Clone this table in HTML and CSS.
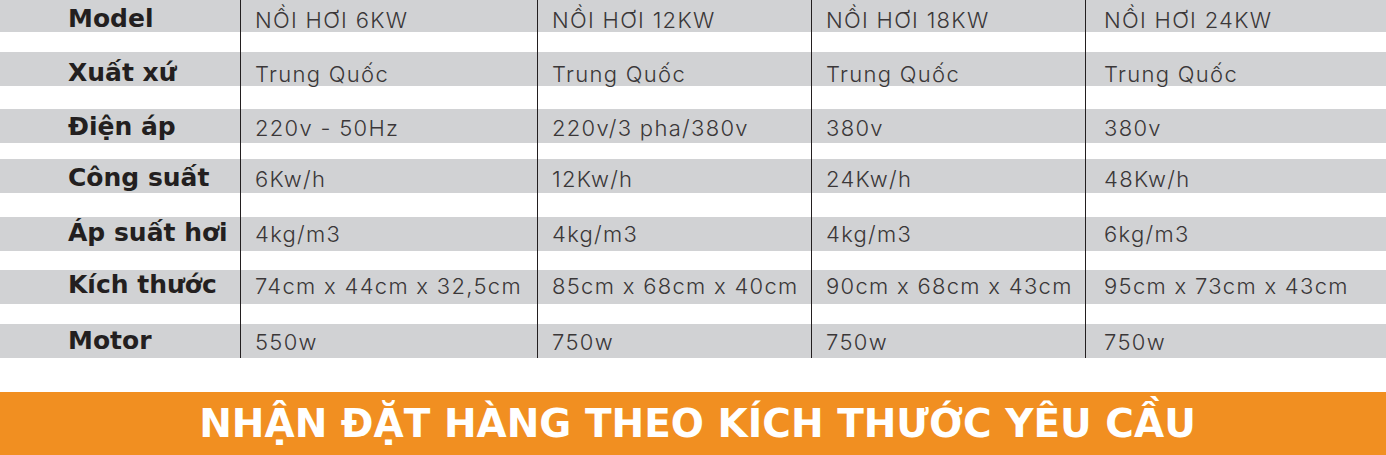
FILE: index.html
```html
<!DOCTYPE html>
<html lang="vi">
<head>
<meta charset="utf-8">
<title>Thông số nồi hơi</title>
<link rel="stylesheet" href="styles.css">
</head>
<body>
<div class="spec">
  <div class="row r1">
    <div class="cell label">Model</div>
    <div class="cell value">NỒI HƠI 6KW</div>
    <div class="cell value">NỒI HƠI 12KW</div>
    <div class="cell value">NỒI HƠI 18KW</div>
    <div class="cell value last">NỒI HƠI 24KW</div>
  </div>
  <div class="row r2">
    <div class="cell label">Xuất xứ</div>
    <div class="cell value">Trung Quốc</div>
    <div class="cell value">Trung Quốc</div>
    <div class="cell value">Trung Quốc</div>
    <div class="cell value last">Trung Quốc</div>
  </div>
  <div class="row r3">
    <div class="cell label">Điện áp</div>
    <div class="cell value">220v - 50Hz</div>
    <div class="cell value">220v/3 pha/380v</div>
    <div class="cell value">380v</div>
    <div class="cell value last">380v</div>
  </div>
  <div class="row r4">
    <div class="cell label">Công suất</div>
    <div class="cell value">6Kw/h</div>
    <div class="cell value">12Kw/h</div>
    <div class="cell value">24Kw/h</div>
    <div class="cell value last">48Kw/h</div>
  </div>
  <div class="row r5">
    <div class="cell label">Áp suất hơi</div>
    <div class="cell value">4kg/m3</div>
    <div class="cell value">4kg/m3</div>
    <div class="cell value">4kg/m3</div>
    <div class="cell value last">6kg/m3</div>
  </div>
  <div class="row r6">
    <div class="cell label">Kích thước</div>
    <div class="cell value">74cm x 44cm x 32,5cm</div>
    <div class="cell value">85cm x 68cm x 40cm</div>
    <div class="cell value">90cm x 68cm x 43cm</div>
    <div class="cell value last">95cm x 73cm x 43cm</div>
  </div>
  <div class="row r7">
    <div class="cell label">Motor</div>
    <div class="cell value">550w</div>
    <div class="cell value">750w</div>
    <div class="cell value">750w</div>
    <div class="cell value last">750w</div>
  </div>
</div>
<div class="banner">NHẬN ĐẶT HÀNG THEO KÍCH THƯỚC YÊU CẦU</div>
</body>
</html>
```
FILE: styles.css
```css
html, body {
  margin: 0;
  padding: 0;
  background: #ffffff;
}

body {
  width: 1386px;
  height: 455px;
  overflow: hidden;
  color: #231f20;
}

.spec {
  display: flex;
  flex-direction: column;
}

.row {
  --band: 34px;
  --h: 54px;
  --pb: 1px;
  display: grid;
  grid-template-columns: 240px 297px 274px 274px 1fr;
  height: var(--h);
}

.r1 { --h: 32px; --band: 32px; --pb: 1px; }
.r2 { --h: 54px; --pb: 1px; }
.r3 { --h: 57px; --pb: 4px; }
.r4 { --h: 50px; --pb: 3px; }
.r5 { --h: 58px; --pb: 6px; }
.r6 { --h: 53px; --pb: 7px; }
.r7 { --h: 54px; --pb: 5px; }

.cell {
  box-sizing: border-box;
  display: flex;
  align-items: flex-end;
  padding-bottom: var(--pb);
  white-space: nowrap;
  line-height: 1;
  background: linear-gradient(#d1d2d4, #d1d2d4) left bottom / 100% var(--band) no-repeat;
}

.label {
  padding-left: 68px;
  font-family: "DejaVu Sans", sans-serif;
  font-weight: 700;
  font-size: 25px;
}

.value {
  border-left: 1px solid #231f20;
  padding-left: 14px;
  font-family: "Inter", "Liberation Sans", sans-serif;
  font-weight: 300;
  font-size: 22px;
  letter-spacing: 1.3px;
  color: #3a3738;
}

.value.last {
  padding-left: 18px;
}

.banner {
  margin-top: 34px;
  height: 63px;
  box-sizing: border-box;
  padding-left: 9px;
  display: flex;
  align-items: center;
  justify-content: center;
  background: #f18f21;
  color: #ffffff;
  font-family: "DejaVu Sans", sans-serif;
  font-weight: 700;
  font-size: 39px;
  white-space: nowrap;
}
```
